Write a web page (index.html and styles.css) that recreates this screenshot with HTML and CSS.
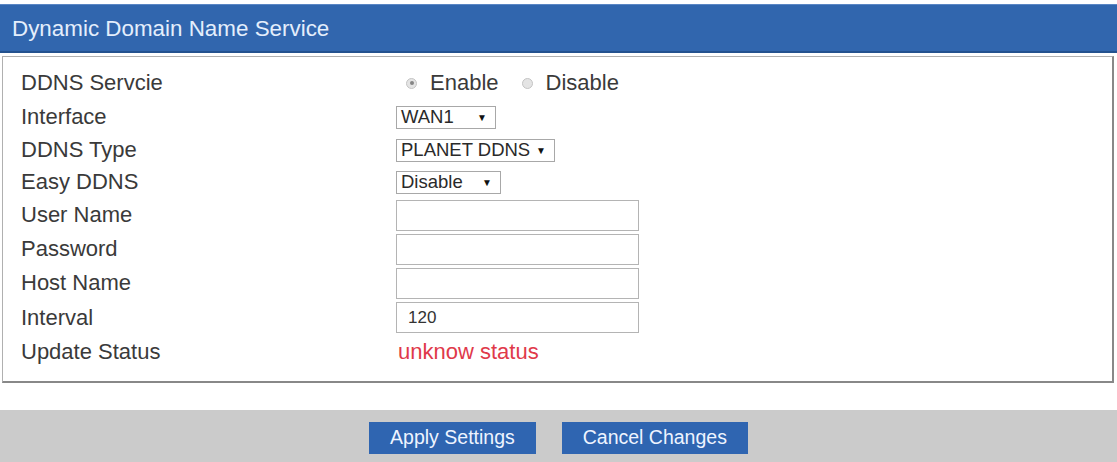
FILE: index.html
```html
<!DOCTYPE html>
<html lang="en">
<head>
  <meta charset="UTF-8">
  <title>Dynamic Domain Name Service</title>
  <link rel="stylesheet" href="styles.css">
</head>
<body>

  <div class="panel-title">Dynamic Domain Name Service</div>

  <div class="panel">
    <div class="row">
      <label>DDNS Servcie</label>
      <div class="field radios">
        <span class="radio checked"></span><span class="radio-text">Enable</span>
        <span class="radio"></span><span class="radio-text">Disable</span>
      </div>
    </div>
    <div class="row">
      <label>Interface</label>
      <div class="field"><span class="select" style="width: 100px;">WAN1</span></div>
    </div>
    <div class="row short">
      <label>DDNS Type</label>
      <div class="field"><span class="select" style="width: 159px;">PLANET DDNS</span></div>
    </div>
    <div class="row short">
      <label>Easy DDNS</label>
      <div class="field"><span class="select" style="width: 105px;">Disable</span></div>
    </div>
    <div class="row">
      <label>User Name</label>
      <div class="field"><input type="text"></div>
    </div>
    <div class="row">
      <label>Password</label>
      <div class="field"><input type="password"></div>
    </div>
    <div class="row">
      <label>Host Name</label>
      <div class="field"><input type="text"></div>
    </div>
    <div class="row tall">
      <label>Interval</label>
      <div class="field"><input type="text" value="120"></div>
    </div>
    <div class="row">
      <label>Update Status</label>
      <div class="field status">unknow status</div>
    </div>
  </div>

  <div class="footer">
    <button>Apply Settings</button>
    <button>Cancel Changes</button>
  </div>

</body>
</html>
```

FILE: styles.css
```css
body {
  margin: 0;
  font-family: "Liberation Sans", Arial, sans-serif;
  background: #fff;
  color: #333;
}

.panel-title {
  margin-top: 4px;
  height: 46px;
  line-height: 47px;
  padding-left: 12px;
  background: #3166ae;
  border-top: 1px solid #5a86c4;
  border-bottom: 2px solid #24528f;
  color: #e4eefc;
  font-size: 22.4px;
}

.panel {
  margin: 3px 3px 0 2px;
  padding: 9px 18px 12px;
  border: 1px solid #b0b0b0;
  border-right: 2px solid #888;
  border-bottom: 2px solid #888;
}

.row {
  display: flex;
  align-items: center;
  height: 34px;
}

.row.short {
  height: 32px;
}

.row.tall {
  height: 35px;
}

.row label {
  width: 375px;
  font-size: 22px;
  color: #3a3a3a;
}

.field {
  display: flex;
  align-items: center;
  font-size: 22px;
}

.radios {
  padding-left: 10px;
}

.radio {
  width: 11px;
  height: 11px;
  margin-right: 13px;
  border: 1px solid #c4c4c4;
  border-radius: 50%;
  background: #e4e4e4;
  box-sizing: border-box;
  position: relative;
}

.radio.checked::after {
  content: "";
  position: absolute;
  left: 2.5px;
  top: 2.5px;
  width: 4px;
  height: 4px;
  border-radius: 50%;
  background: #858585;
}

.radio-text {
  margin-right: 23px;
  color: #3a3a3a;
}

.select {
  display: flex;
  justify-content: space-between;
  align-items: center;
  height: 23px;
  padding: 0 8px 0 4px;
  border: 1px solid #a8a8a8;
  box-sizing: border-box;
  font-size: 18.5px;
  color: #2a2a2a;
  background: #fff;
}

.select::after {
  content: "\25BC";
  font-size: 10px;
  color: #111;
}

input[type="text"],
input[type="password"] {
  width: 243px;
  height: 31px;
  box-sizing: border-box;
  border: 1px solid #b4b4b4;
  padding: 0 10px 0 11px;
  font-family: "Liberation Sans", Arial, sans-serif;
  font-size: 17px;
  color: #333;
}

.status {
  color: #e0394a;
  padding-left: 2px;
}

.footer {
  margin-top: 27px;
  height: 53px;
  background: #cbcbcb;
  display: flex;
  justify-content: center;
  align-items: center;
  gap: 26px;
  padding-top: 1px;
}

button {
  background: #2f65b1;
  color: #eef4ff;
  border: none;
  height: 32px;
  padding: 0 21px;
  font-family: "Liberation Sans", Arial, sans-serif;
  font-size: 19.5px;
  cursor: pointer;
}
```
